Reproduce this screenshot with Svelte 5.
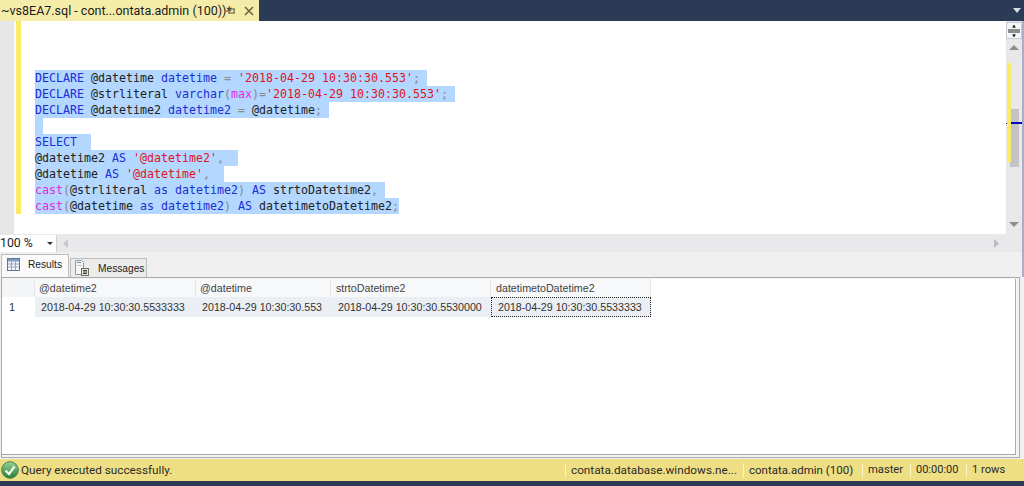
<script>
  const lines = [
    [["DECLARE", "k"], [" @datetime ", ""], ["datetime", "k"], [" = ", "g"], ["'2018-04-29 10:30:30.553'", "s"], ["; ", "g"]],
    [["DECLARE", "k"], [" @strliteral ", ""], ["varchar", "k"], ["(", "g"], ["max", "f"], [")=", "g"], ["'2018-04-29 10:30:30.553'", "s"], ["; ", "g"]],
    [["DECLARE", "k"], [" @datetime2 ", ""], ["datetime2", "k"], [" = ", "g"], ["@datetime", ""], ["; ", "g"]],
    [],
    [["SELECT  ", "k"]],
    [["@datetime2 ", ""], ["AS", "k"], [" ", ""], ["'@datetime2'", "s"], [",  ", "g"]],
    [["@datetime ", ""], ["AS", "k"], [" ", ""], ["'@datetime'", "s"], [",  ", "g"]],
    [["cast", "f"], ["(", "g"], ["@strliteral ", ""], ["as", "k"], [" ", ""], ["datetime2", "k"], [")", "g"], [" ", ""], ["AS", "k"], [" strtoDatetime2", ""], [", ", "g"]],
    [["cast", "f"], ["(", "g"], ["@datetime ", ""], ["as", "k"], [" ", ""], ["datetime2", "k"], [")", "g"], [" ", ""], ["AS", "k"], [" datetimetoDatetime2", ""], [";", "g"]]
  ];
  const columns = ["@datetime2", "@datetime", "strtoDatetime2", "datetimetoDatetime2"];
  const row = ["2018-04-29 10:30:30.5533333", "2018-04-29 10:30:30.553", "2018-04-29 10:30:30.5530000", "2018-04-29 10:30:30.5533333"];
  const status = ["contata.database.windows.ne...", "contata.admin (100)", "master", "00:00:00", "1 rows"];
</script>

<div class="window">
  <div class="titlebar">
    <div class="tab">
      <span class="tabname">~vs8EA7.sql - cont...ontata.admin (100))*</span>
      <svg class="pin" width="10" height="10" viewBox="0 0 10 10">
        <path d="M0 5h3M3 2v6M3 3h6M3 7h6M8 3v4" fill="none" stroke="#5b5436" stroke-width="1"/>
      </svg>
      <svg class="close" width="10" height="10" viewBox="0 0 10 10">
        <path d="M1 1l8 8M9 1l-8 8" fill="none" stroke="#6b6442" stroke-width="1.6"/>
      </svg>
    </div>
    <svg class="tabmenu" width="8" height="5" viewBox="0 0 8 5"><path d="M0 0h8L4 5z" fill="#d8dde6"/></svg>
  </div>

  <div class="editor">
    <div class="gutter"></div>
    <div class="changebar"></div>
    <div class="code">
      {#each lines as line}
        <div class="line">
          {#if line.length}
            <span class="sel">{#each line as [text, cls]}<span class={cls}>{text}</span>{/each}</span>
          {:else}
            <span class="sel blank"></span>
          {/if}
        </div>
      {/each}
    </div>
    <div class="vscroll">
      <div class="split">
        <svg width="12" height="12" viewBox="0 0 12 12">
          <path d="M0 5h12M0 7h12M6 0v3M6 9v3" stroke="#222" fill="none"/>
          <path d="M4 2.500L6 0l2 2.500zM4 9.500L6 12l2-2.500z" fill="#222"/>
        </svg>
      </div>
      <svg class="arrow up" width="10" height="5" viewBox="0 0 10 5"><path d="M0 5L5 0l5 5z" fill="#8e8e90"/></svg>
      <div class="thumb"></div>
      <div class="yellowmark"></div>
      <div class="caretdot"></div>
      <div class="caretmark"></div>
      <svg class="arrow down" width="10" height="5" viewBox="0 0 10 5"><path d="M0 0h10L5 5z" fill="#8e8e90"/></svg>
    </div>
  </div>

  <div class="hbar">
    <div class="zoom">
      <span>100 %</span>
      <svg width="6" height="3" viewBox="0 0 6 3"><path d="M0 0h6L3 3z" fill="#333"/></svg>
    </div>
    <svg class="hleft" width="5" height="9" viewBox="0 0 5 9"><path d="M5 0v9L0 4.500z" fill="#c8c8ca"/></svg>
    <svg class="hright" width="5" height="9" viewBox="0 0 5 9"><path d="M0 0v9l5-4.500z" fill="#bdbdc0"/></svg>
  </div>

  <div class="tabs">
    <div class="rtab active">
      <svg width="13" height="13" viewBox="0 0 13 13">
        <rect x="0.500" y="0.500" width="12" height="12" fill="#f3f6fb" stroke="#5f7692"/>
        <rect x="1" y="1" width="11" height="2.500" fill="#7f9cc4"/>
        <path d="M4.500 1v11M8.500 1v11M1 6h11M1 9h11" stroke="#8ea6c6" fill="none"/>
      </svg>
      <span>Results</span>
    </div>
    <div class="rtab">
      <svg width="14" height="16" viewBox="0 0 14 16">
        <path d="M0.500 0.500h6l2 2v12h-8z" fill="#f6f6f6" stroke="#8c9aa8"/>
        <rect x="2" y="2" width="4" height="1" fill="#5a93c8"/>
        <rect x="2" y="5" width="5" height="1" fill="#b5c4d3"/>
        <rect x="6.500" y="8.500" width="7" height="7" fill="#e9e6d6" stroke="#6f6f5f"/>
        <path d="M8 10.500h4M8 12h4M8 13.500h4" stroke="#444"/>
      </svg>
      <span>Messages</span>
    </div>
  </div>

  <div class="pane">
    <div class="outer">
      <div class="results">
        <div class="grid">
          <div class="head corner"></div>
          {#each columns as c}<div class="head">{c}</div>{/each}
          <div class="rownum">1</div>
          {#each row as v, i}<div class="cell" class:current={i === 3}>{v}</div>{/each}
        </div>
      </div>
    </div>
  </div>

  <div class="status">
    <svg width="18" height="18" viewBox="0 0 18 18">
      <defs>
        <linearGradient id="ok" x1="0" y1="0" x2="0" y2="1">
          <stop offset="0" stop-color="#9ad39a"/>
          <stop offset="1" stop-color="#1f7f2f"/>
        </linearGradient>
      </defs>
      <circle cx="9" cy="9" r="8.300" fill="url(#ok)" stroke="#4d7a4d"/>
      <path d="M4.500 9.500L8 13l5.500-7.500" fill="none" stroke="#f4fbf4" stroke-width="2.200"/>
    </svg>
    <span class="msg">Query executed successfully.</span>
    {#each status as s}<span class="seg">{s}</span>{/each}
  </div>
  <div class="footer"></div>
</div>

<style>
  :global(body) {
    margin: 0;
    background: #2b3a55;
  }

  .window {
    width: 1024px;
    height: 486px;
    display: flex;
    flex-direction: column;
    overflow: hidden;
    background: #f0f0f0;
    font-family: "Liberation Sans", Arial, sans-serif;
  }

  .titlebar {
    height: 21px;
    flex: none;
    display: flex;
    justify-content: space-between;
    align-items: center;
    background: #2b3a55;
  }

  .tab {
    width: 259px;
    height: 21px;
    display: flex;
    align-items: center;
    background: #f5ecaa;
    color: #1c1c1c;
    font: 12.500px Roboto, sans-serif;
  }

  .tabname {
    padding-left: 1px;
    white-space: nowrap;
    width: 225px;
    flex: none;
  }

  .close {
    margin-left: 8px;
  }

  .tabmenu {
    margin-right: 3px;
  }

  .editor {
    height: 213px;
    flex: none;
    display: flex;
    position: relative;
    background: #fff;
    border-right: 2px solid #a9afcb;
    box-sizing: border-box;
  }

  .gutter {
    width: 14px;
    background: #e6e7e8;
    flex: none;
  }

  .changebar {
    width: 5px;
    height: 193px;
    margin-left: 2px;
    background: #fbe968;
    flex: none;
  }

  .code {
    flex: 1;
    padding: 50px 0 0 14px;
    font: 11.630px/16px "DejaVu Sans Mono", monospace;
    color: #222;
    white-space: pre;
  }

  .line {
    height: 16px;
  }

  .sel {
    display: inline-block;
    height: 16px;
    margin-top: -1px;
    background: #b3d7ff;
    vertical-align: top;
  }

  .blank {
    width: 8px;
  }

  .k { color: #1a2fd6; }
  .s { color: #e0141c; }
  .g { color: #8a8a8a; }
  .f { color: #e22be0; }

  .vscroll {
    width: 16px;
    flex: none;
    position: relative;
    background: #e8e8ea;
    display: flex;
    flex-direction: column;
    align-items: center;
  }

  .split {
    width: 16px;
    height: 17px;
    margin-top: 1px;
    box-sizing: border-box;
    border: 1px solid #c4c9d4;
    background: #f4f5f7;
    display: flex;
    align-items: center;
    justify-content: center;
    flex: none;
  }

  .arrow.up {
    margin-top: 6px;
  }

  .arrow.down {
    margin-top: auto;
    margin-bottom: 7px;
  }

  .thumb {
    position: absolute;
    left: 4px;
    top: 88px;
    width: 9px;
    height: 58px;
    background: #c2c3c5;
  }

  .yellowmark {
    position: absolute;
    left: 1px;
    top: 42px;
    width: 4px;
    height: 99px;
    background: #fbe968;
  }

  .caretdot {
    position: absolute;
    left: 0;
    top: 102px;
    width: 1px;
    height: 1px;
    background: #111;
  }

  .caretmark {
    position: absolute;
    left: 5px;
    top: 101px;
    width: 11px;
    height: 2px;
    background: #0000c0;
  }

  .hbar {
    height: 18px;
    flex: none;
    display: flex;
    align-items: center;
    background: #e9e9eb;
    border-right: 2px solid #a9afcb;
    box-sizing: border-box;
  }

  .zoom {
    width: 57px;
    height: 17px;
    box-sizing: border-box;
    padding: 0 3px 0 0;
    background: #fff;
    border-right: 1px solid #d0d0d0;
    display: flex;
    justify-content: space-between;
    align-items: center;
    font: 12.300px Roboto, sans-serif;
    color: #1e1e1e;
  }

  .hleft {
    margin-left: 6px;
  }

  .hright {
    margin-left: auto;
    margin-right: 23px;
  }

  .tabs {
    height: 25px;
    flex: none;
    display: flex;
    align-items: flex-end;
    padding-left: 1px;
    background: #f0f0f0;
    border-right: 2px solid #a9afcb;
    box-sizing: border-box;
  }

  .rtab {
    display: flex;
    align-items: center;
    height: 19px;
    width: 77px;
    padding: 0 0 0 4px;
    border: 1px solid #bdbdbd;
    border-bottom: 0;
    background: #ececec;
    font-size: 10.200px;
    color: #222;
    box-sizing: border-box;
  }

  .rtab span {
    margin-left: 9px;
  }

  .rtab.active {
    height: 23px;
    width: 68px;
    margin: 0 1px 0 0;
    background: #fafafa;
    padding: 0 0 4px 5px;
  }

  .rtab.active span {
    margin-left: 8px;
  }

  .pane {
    flex: 1;
    min-height: 0;
    display: flex;
    padding: 0 4px 1px 1px;
    background: #f0f0f0;
    box-sizing: border-box;
  }

  .outer {
    flex: 1;
    display: flex;
    padding: 1px 3px 2px 0;
    border: 1px solid #a9a9a9;
    box-sizing: border-box;
    background: #f4f4f4;
    min-width: 0;
  }

  .results {
    flex: 1;
    background: #fff;
    border-right: 1px solid #a9a9a9;
    border-bottom: 1px solid #a9a9a9;
    min-height: 0;
  }

  .grid {
    display: grid;
    grid-template-columns: 33px 161px 135px 160px 160px;
    grid-template-rows: 18px 20px;
    width: max-content;
    font-size: 10.700px;
    color: #333;
  }

  .head {
    background: #f7f8fa;
    border-right: 1px solid #e6e6e6;
    display: flex;
    align-items: center;
    padding-left: 4px;
    box-sizing: border-box;
    color: #444;
  }

  .head:nth-child(n+4):nth-child(-n+5) {
    padding-left: 5px;
  }

  .corner {
    background: #f4f5f7;
  }

  .rownum {
    background: #fff;
    padding-left: 7px;
    display: flex;
    align-items: center;
    font-size: 11px;
  }

  .cell {
    background: #ebeef2;
    display: flex;
    align-items: center;
    padding-left: 6px;
    white-space: nowrap;
    box-sizing: border-box;
  }

  .cell:nth-last-child(-n+2) {
    padding-left: 7px;
  }

  .cell.current {
    outline: 1px dotted #222;
    outline-offset: -1px;
  }

  .status {
    height: 22px;
    flex: none;
    display: flex;
    align-items: center;
    background: #efdf84;
    padding-left: 1px;
    font: 11.750px Roboto, sans-serif;
    color: #2a2a2a;
    box-sizing: border-box;
  }

  .msg {
    margin-left: 2px;
    width: 544px;
    flex: none;
    white-space: nowrap;
  }

  .seg {
    border-left: 1px solid #fbf5c8;
    padding: 0 0 0 5px;
    line-height: 14px;
    white-space: nowrap;
    box-sizing: border-box;
    flex: none;
  }

  .seg:nth-child(3) { width: 178px; }
  .seg:nth-child(4) { width: 119px; font-size: 11.500px; }
  .seg:nth-child(5) { width: 48px; font-size: 11.200px; }
  .seg:nth-child(6) { width: 56px; font-size: 11px; }
  .seg:nth-child(7) { font-size: 11.200px; }

  .footer {
    height: 5px;
    flex: none;
    background: #2b3a55;
  }
</style>
